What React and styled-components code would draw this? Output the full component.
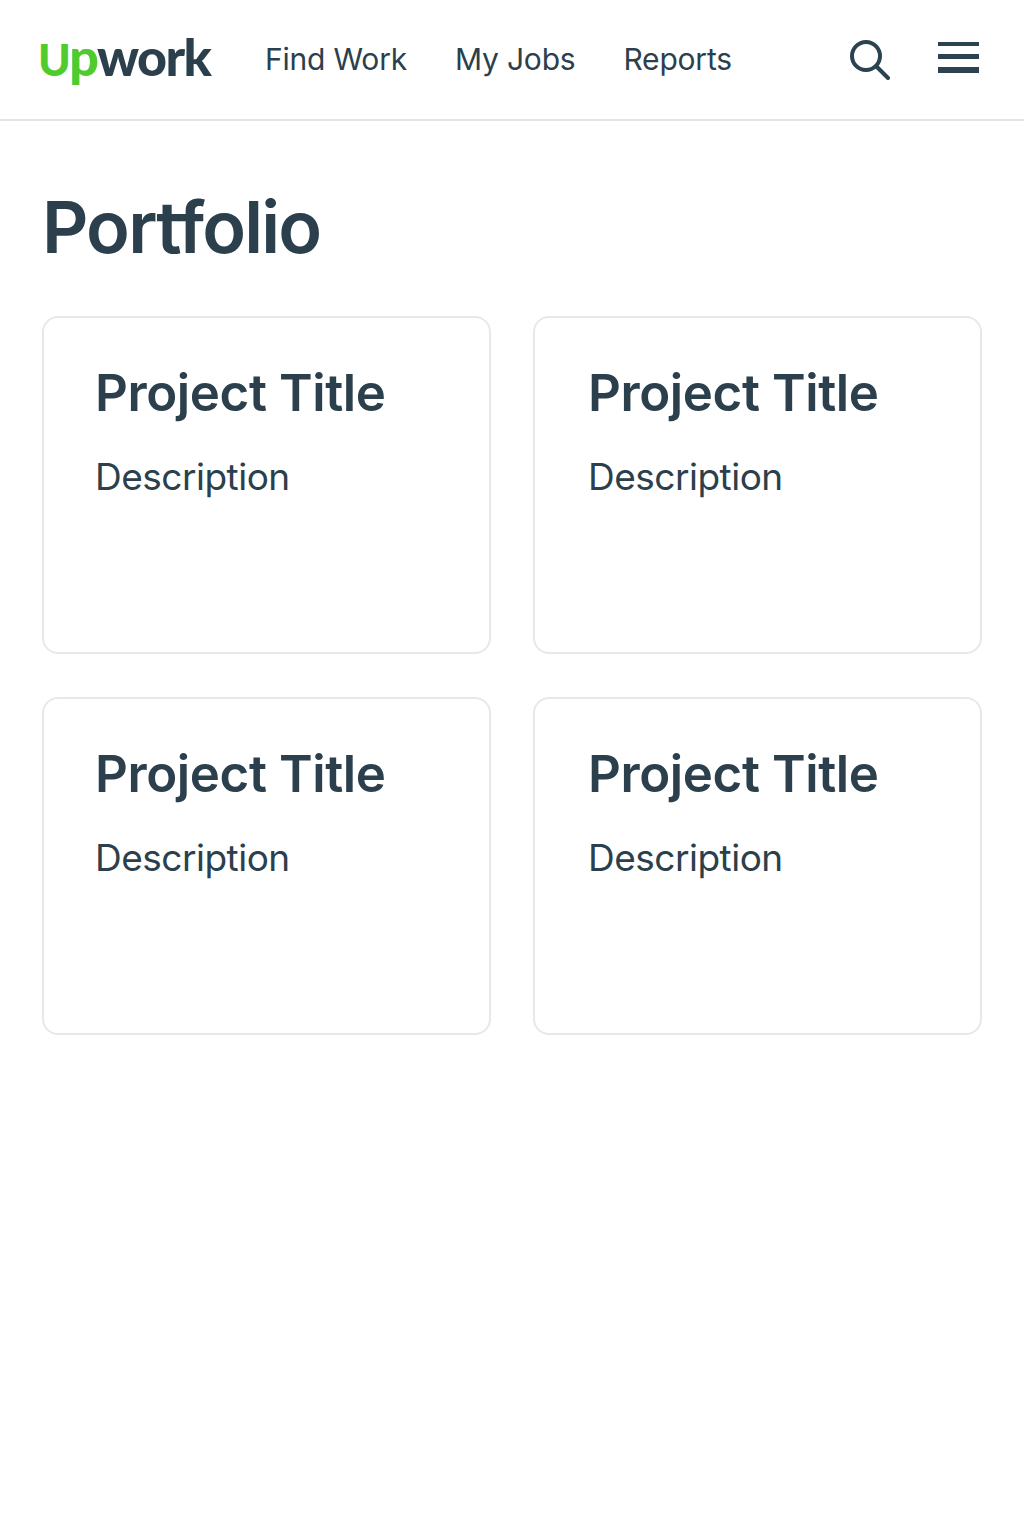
import React from "react";
import styled, { createGlobalStyle } from "styled-components";

const GlobalStyle = createGlobalStyle`
  body {
    margin: 0;
    background: #fff;
    font-family: "Inter", "Liberation Sans", Arial, sans-serif;
    color: #2b3f4c;
  }
`;

const Page = styled.div`
  width: 1024px;
  min-height: 1536px;
  background: #fff;
`;

const Header = styled.header`
  height: 119px;
  border-bottom: 2px solid #dfe5e8;
  display: flex;
  align-items: center;
  padding: 0 45px 0 38px;
`;

const Logo = styled.div`
  width: 176px;
  margin-bottom: 7px;
  font-family: "Lato", sans-serif;
  font-weight: 900;
  font-size: 52px;
  letter-spacing: -1.6px;
  line-height: 1;
  color: #2b3f4c;
`;

const LogoUp = styled.span`
  color: #4fcb2e;
`;

const LogoU = styled.span`
  font-size: 44px;
`;

const Nav = styled.nav`
  display: flex;
  gap: 48px;
  margin-left: 51px;
  padding-bottom: 2px;
  flex: 1;
`;

const NavLink = styled.a`
  font-size: 30px;
  letter-spacing: -0.2px;
  color: #2b3f4c;
`;

const Icons = styled.div`
  display: flex;
  align-items: center;
  gap: 48px;
`;

const Main = styled.main`
  padding: 62px 42px 0;
`;

const Heading = styled.h1`
  margin: 0 0 45px;
  font-size: 72px;
  font-weight: 600;
  line-height: 88px;
  letter-spacing: -1.8px;
`;

const Grid = styled.div`
  display: grid;
  grid-template-columns: repeat(2, 449px);
  grid-auto-rows: 338px;
  column-gap: 42px;
  row-gap: 43px;
`;

const Card = styled.article`
  box-sizing: border-box;
  border: 2px solid #e4e9eb;
  border-radius: 16px;
  padding: 45px 51px;

  &:nth-child(even) {
    padding-left: 53px;
  }
`;

const CardTitle = styled.h2`
  margin: 0 0 32px;
  font-size: 51px;
  font-weight: 600;
  line-height: 60px;
  letter-spacing: -0.4px;
`;

const CardText = styled.p`
  margin: 0;
  font-size: 37px;
  line-height: 44px;
  letter-spacing: -0.5px;
`;

const SearchIcon = () => (
  <svg width="40" height="40" viewBox="0 0 40 40" fill="none" stroke="#2b4250" strokeWidth="4" strokeLinecap="round">
    <circle cx="16" cy="16" r="14" />
    <path d="M26.5 26.5L38 38" />
  </svg>
);

const MenuIcon = () => (
  <svg width="41" height="35" viewBox="0 0 41 35" fill="#2b4250">
    <rect x="0" y="0" width="41" height="4" />
    <rect x="0" y="12" width="41" height="5" />
    <rect x="0" y="25" width="41" height="6" />
  </svg>
);

const projects = [1, 2, 3, 4];

const App = () => (
  <Page>
    <GlobalStyle />
    <Header>
      <Logo>
        <LogoUp>
          <LogoU>U</LogoU>p
        </LogoUp>
        work
      </Logo>
      <Nav>
        <NavLink>Find Work</NavLink>
        <NavLink>My Jobs</NavLink>
        <NavLink>Reports</NavLink>
      </Nav>
      <Icons>
        <SearchIcon />
        <MenuIcon />
      </Icons>
    </Header>
    <Main>
      <Heading>Portfolio</Heading>
      <Grid>
        {projects.map((p) => (
          <Card key={p}>
            <CardTitle>Project Title</CardTitle>
            <CardText>Description</CardText>
          </Card>
        ))}
      </Grid>
    </Main>
  </Page>
);

export default App;
